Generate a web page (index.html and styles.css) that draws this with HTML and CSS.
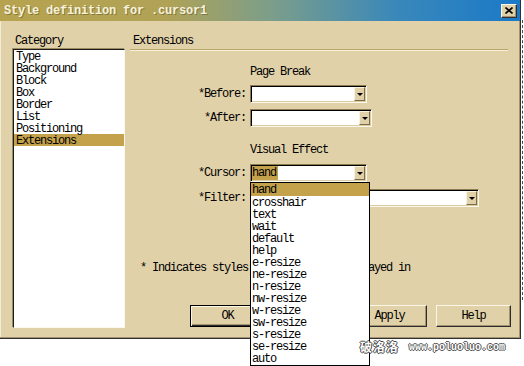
FILE: index.html
```html
<!DOCTYPE html>
<html lang="en">
<head>
    <meta charset="UTF-8">
    <title>Style definition for .cursor1</title>
    <link rel="stylesheet" href="styles.css">
</head>
<body>
    <div class="screen">
        <div class="dialog">
            <div class="titlebar">
                <span class="title">Style definition for .cursor1</span>
                <span class="close">
                    <svg width="8" height="7" viewBox="0 0 8 7"><path d="M0.5 0.5 L7.5 6.5 M7.5 0.5 L0.5 6.5" stroke="#000" stroke-width="1.6"/></svg>
                </span>
            </div>
            <div class="main">
                <div class="category">
                    <div class="caption">Category</div>
                    <ul class="listbox">
                        <li>Type</li>
                        <li>Background</li>
                        <li>Block</li>
                        <li>Box</li>
                        <li>Border</li>
                        <li>List</li>
                        <li>Positioning</li>
                        <li class="selected">Extensions</li>
                    </ul>
                </div>
                <div class="panel">
                    <div class="caption panel-title">Extensions</div>
                    <div class="rule"></div>

                    <div class="section">Page Break</div>
                    <div class="row">
                        <span class="label">*Before:</span>
                        <div class="select w-short"><span class="value"></span><span class="arrow"></span></div>
                    </div>
                    <div class="row">
                        <span class="label">*After:</span>
                        <div class="select w-mid"><span class="value"></span><span class="arrow"></span></div>
                    </div>

                    <div class="section section-gap">Visual Effect</div>
                    <div class="row">
                        <span class="label">*Cursor:</span>
                        <div class="select w-short">
                            <span class="value"><span class="hl">hand</span></span><span class="arrow"></span>
                            <ul class="menu">
                                <li class="active">hand</li>
                                <li>crosshair</li>
                                <li>text</li>
                                <li>wait</li>
                                <li>default</li>
                                <li>help</li>
                                <li>e-resize</li>
                                <li>ne-resize</li>
                                <li>n-resize</li>
                                <li>nw-resize</li>
                                <li>w-resize</li>
                                <li>sw-resize</li>
                                <li>s-resize</li>
                                <li>se-resize</li>
                                <li>auto</li>
                            </ul>
                        </div>
                    </div>
                    <div class="row">
                        <span class="label">*Filter:</span>
                        <div class="select w-long"><span class="value"></span><span class="arrow"></span></div>
                    </div>

                    <p class="note">* Indicates styles which are not displayed in</p>

                    <div class="buttons">
                        <button class="btn default">OK</button>
                        <button class="btn">Cancel</button>
                        <button class="btn">Apply</button>
                        <button class="btn help">Help</button>
                    </div>
                </div>
            </div>
        </div>
        <div class="edge"></div>
    </div>
    <div class="watermark">
        <span class="wm-cn">破洛洛</span>
        <span class="wm-url">www.poluoluo.com</span>
    </div>
</body>
</html>
```

FILE: styles.css
```css
html, body {
    height: 366px;
}

body {
    margin: 0;
    background: #fff;
    font-family: "Liberation Mono", "Noto Sans CJK SC", monospace;
    font-size: 12px;
    letter-spacing: -1.2px;
    color: #000;
}

ul {
    list-style: none;
    margin: 0;
    padding: 0;
}

.screen {
    display: flex;
}

.edge {
    width: 0;
    height: 280px;
    margin: 20px 0 0 1px;
    border-left: 1px dashed #4a4a4a;
}

.dialog {
    width: 521px;
    height: 339px;
    flex-shrink: 0;
    box-sizing: border-box;
    background: #e0d1a9;
    border-right: 1px solid #303030;
    border-bottom: 1px solid #303030;
    box-shadow: inset -1px -1px 0 #a39370, inset 1px 1px 0 #f4ecd4;
}

.titlebar {
    height: 21px;
    display: flex;
    align-items: center;
    justify-content: space-between;
    padding: 0 3px 0 4px;
    background: linear-gradient(to right, #b7a34f 0%, #b0a256 32%, #7c9e8a 52%, #3a88ba 76%, #1a79c8 100%);
}

.title {
    color: #f6f2dc;
    font-weight: bold;
    font-size: 12px;
    letter-spacing: -0.2px;
    text-shadow: 1px 1px 0 rgba(90, 80, 30, 0.5);
}

.close {
    width: 16px;
    height: 14px;
    box-sizing: border-box;
    display: flex;
    align-items: center;
    justify-content: center;
    background: #e0d1a9;
    border: 1px solid;
    border-color: #fbf6e6 #303030 #303030 #fbf6e6;
    box-shadow: inset -1px -1px 0 #a39370;
}

.main {
    display: flex;
    gap: 5px;
    padding: 13px 0 0 13px;
}

.caption {
    line-height: 14px;
    height: 14px;
}

.category {
    width: 112px;
}

.category .caption {
    padding-left: 2px;
}

.listbox {
    margin-top: 1px;
    height: 279px;
    box-sizing: border-box;
    background: #fff;
    border: 1px solid;
    border-color: #1c1c1c #fbf7ea #fbf7ea #1c1c1c;
    box-shadow: -1px -1px 0 #9c8c62;
}

.listbox li {
    height: 12px;
    line-height: 15px;
    padding-left: 2px;
}

.listbox li.selected {
    background: #c4a24c;
}

.panel {
    flex: 1;
    padding-right: 9px;
}

.panel-title {
    padding-left: 3px;
}

.rule {
    margin: 1px 3px 0 0;
    height: 1px;
    background: #b9a66a;
    border-bottom: 1px solid #f6efda;
}

.section {
    margin-top: 14px;
    line-height: 14px;
    height: 14px;
    padding-left: 120px;
}

.section.section-gap {
    margin-top: 16px;
}

.row {
    display: flex;
    align-items: center;
    margin-top: 6px;
}

.section-gap + .row {
    margin-top: 7px;
}

.row + .row {
    margin-top: 6px;
}

.section-gap ~ .row + .row {
    margin-top: 7px;
}

.label {
    width: 120px;
    padding-right: 4px;
    box-sizing: border-box;
    text-align: right;
}

.select {
    position: relative;
    height: 18px;
    box-sizing: border-box;
    display: flex;
    background: #fff;
    border: 1px solid;
    border-color: #8c7b4f #fbf7ea #fbf7ea #8c7b4f;
    box-shadow: inset 1px 1px 0 #000, inset -1px -1px 0 #dccca2;
}

.w-short { width: 117px; }
.w-mid { width: 122px; }
.w-long { width: 229px; }

.value {
    flex: 1;
    padding: 1px 0 0 1px;
    line-height: 14px;
}

.hl {
    background: #c4a24c;
    padding-right: 2px;
}

.arrow {
    width: 11px;
    margin: 1px 1px 1px 0;
    box-sizing: border-box;
    display: flex;
    align-items: center;
    justify-content: center;
    background: #e0d1a9;
    border: 1px solid;
    border-color: #f8f2de #7a6c48 #7a6c48 #f8f2de;
}

.arrow::after {
    content: "";
    border-left: 3px solid transparent;
    border-right: 3px solid transparent;
    border-top: 3px solid #000;
}

.menu {
    position: absolute;
    left: -1px;
    top: 17px;
    width: 120px;
    height: 184px;
    box-sizing: border-box;
    background: #fff;
    border: 1px solid #000;
    z-index: 5;
}

.menu li {
    height: 12px;
    line-height: 14px;
    padding-left: 1px;
}

.menu li.active {
    height: 13px;
    line-height: 15px;
    background: #c4a24c;
}

.note {
    margin: 54px 0 0;
    padding-left: 10px;
    line-height: 14px;
}

.buttons {
    display: flex;
    justify-content: flex-end;
    gap: 6px;
    margin-top: 30px;
}

.btn {
    width: 75px;
    height: 22px;
    padding: 0;
    font-family: inherit;
    font-size: 12px;
    letter-spacing: -1.2px;
    color: #000;
    background: #e0d1a9;
    border: 1px solid;
    border-color: #fbf6e6 #2c2c2c #2c2c2c #fbf6e6;
    box-shadow: inset -1px -1px 0 #a39370;
}

.btn.default {
    border: 1px solid #000;
    box-shadow: inset 1px 1px 0 #fbf6e6, inset -1px -1px 0 #2c2c2c, inset -2px -2px 0 #a39370;
}

.btn.help {
    margin-left: 3px;
}

.watermark {
    position: relative;
    z-index: 10;
    display: flex;
    align-items: center;
    gap: 10px;
    width: 150px;
    margin: 1px 0 0 360px;
    height: 14px;
}

.wm-cn {
    font-family: "Noto Sans CJK SC", sans-serif;
    font-size: 12px;
    line-height: 14px;
    font-weight: bold;
    letter-spacing: 1px;
    color: #fff;
    text-shadow: 1px 0 0 #444, -1px 0 0 #444, 0 1px 0 #444, 0 -1px 0 #444;
}

.wm-url {
    font-family: "Liberation Mono", monospace;
    font-size: 10px;
    font-weight: bold;
    letter-spacing: 0;
    color: #fff;
    text-shadow: 1px 0 0 #555, -1px 0 0 #555, 0 1px 0 #555, 0 -1px 0 #555;
}
```
